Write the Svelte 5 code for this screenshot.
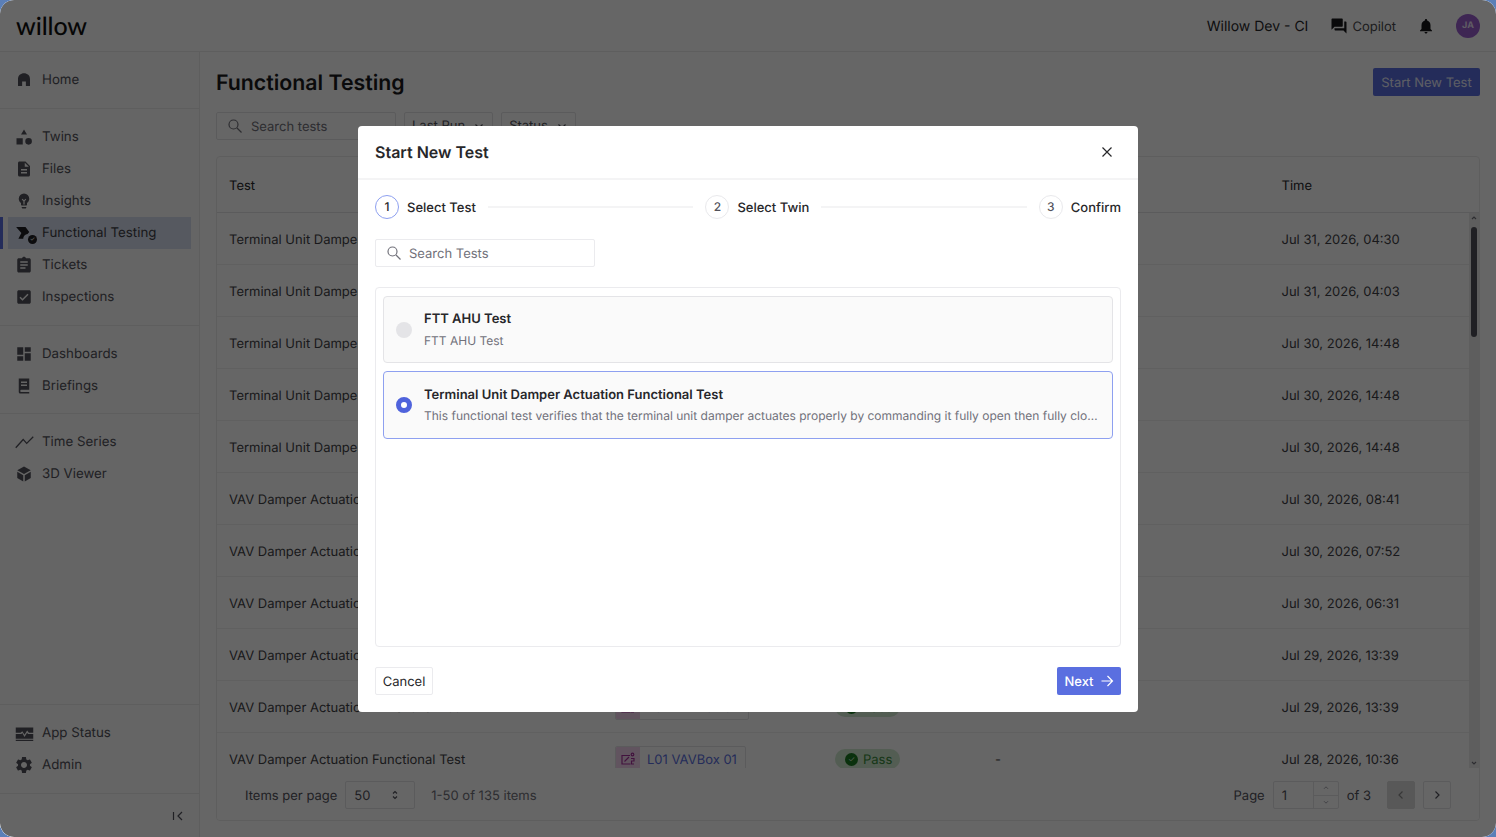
<script lang="ts">
  const icons = {
    home: 'M4 20V10.500C4 6 7.600 3 12 3s8 3 8 7.500V20h-5.500v-6h-5v6z',
    twins: 'M12 3l3.600 6H8.400zM3 13.500h7.500V21H3zM17.500 13.200a4 4 0 1 1 0 8 4 4 0 0 1 0-8z',
    files: 'M14 2H6c-1.100 0-2 .9-2 2v16c0 1.100.9 2 2 2h12c1.100 0 2-.9 2-2V8l-6-6zm2 16H8v-2h8v2zm0-4H8v-2h8v2zm-3-5V3.500L18.500 9H13z',
    insights: 'M12 2a7 7 0 0 0-7 7c0 2.380 1.190 4.470 3 5.740V17a1 1 0 0 0 1 1h6a1 1 0 0 0 1-1v-2.260c1.810-1.270 3-3.360 3-5.740a7 7 0 0 0-7-7zM11.200 16.500v-4.200L9 10l1-1 2 2 2-2 1 1-2.200 2.300v4.200zM9 21a1 1 0 0 0 1 1h4a1 1 0 0 0 1-1v-1H9v1z',
    tickets: 'M19 3h-4.200C14.400 1.800 13.300 1 12 1s-2.400.8-2.800 2H5c-1.100 0-2 .9-2 2v15c0 1.100.9 2 2 2h14c1.100 0 2-.9 2-2V5c0-1.100-.9-2-2-2zM7 7h10v2H7zm0 4h10v2H7zm0 4h7v2H7z',
    inspections: 'M19 3H5c-1.100 0-2 .9-2 2v14c0 1.100.9 2 2 2h14c1.100 0 2-.9 2-2V5c0-1.100-.9-2-2-2zm-9 14l-4-4 1.400-1.400L10 14.200l6.600-6.600L18 9z',
    dashboards: 'M3 13h8V3H3v10zm0 8h8v-6H3v6zm10 0h8V11h-8v10zm0-18v6h8V3h-8z',
    briefings: 'M5 2h14v15H8.500C7.700 17 7 17.700 7 18.500S7.700 20 8.500 20H19v2H7c-1.100 0-2-.9-2-2zM8 6v2h8V6zm0 4v2h8v-2z',
    series: 'M2 18l8.500-9.500 4 4.500 7.500-7.500',
    viewer: 'M12 2l9 5-9 5-9-5zM3 9l8 4.500V22l-8-4.800zM21 9v8.200L13 22v-8.500z',
    status: 'M2 5h20v6h-5l-2-2.500-3 5-2.500-4L7.500 11H2zM2 12.500h6.500l1-1.200L12 16l3-5 1 1.500h6V18H2zM2 19h20v1.500H2z',
    admin: 'M19.140 12.940c.04-.3.06-.61.06-.94 0-.32-.02-.64-.07-.94l2.030-1.580c.18-.14.23-.41.12-.61l-1.920-3.320c-.12-.22-.37-.29-.59-.22l-2.390.96c-.5-.38-1.030-.7-1.620-.94l-.36-2.540c-.04-.24-.24-.41-.48-.41h-3.840c-.24 0-.43.17-.47.41l-.36 2.540c-.59.24-1.130.57-1.620.94l-2.390-.96c-.22-.08-.47 0-.59.22L2.740 8.870c-.12.21-.08.47.12.61l2.030 1.580c-.05.3-.09.63-.09.94s.02.64.07.94l-2.030 1.580c-.18.14-.23.41-.12.61l1.920 3.320c.12.22.37.29.59.22l2.390-.96c.5.38 1.030.7 1.620.94l.36 2.540c.05.24.24.41.48.41h3.840c.24 0 .44-.17.47-.41l.36-2.540c.59-.24 1.130-.56 1.620-.94l2.390.96c.22.08.47 0 .59-.22l1.920-3.320c.12-.22.07-.47-.12-.61l-2.010-1.580zM12 15.600c-1.980 0-3.600-1.620-3.600-3.600s1.620-3.600 3.600-3.600 3.600 1.620 3.600 3.600-1.620 3.600-3.600 3.600z',
    functional: 'M1.500 4H14l5 6.500-2.200 2.800a6 6 0 0 0-5.800 6.200H4.500L8.500 12z'
  };

  const navGroups = [
    [{ label: 'Home', icon: 'home' }],
    [
      { label: 'Twins', icon: 'twins', size: 20 },
      { label: 'Files', icon: 'files' },
      { label: 'Insights', icon: 'insights' },
      { label: 'Functional Testing', icon: 'functional', active: true },
      { label: 'Tickets', icon: 'tickets' },
      { label: 'Inspections', icon: 'inspections' }
    ],
    [
      { label: 'Dashboards', icon: 'dashboards' },
      { label: 'Briefings', icon: 'briefings' }
    ],
    [
      { label: 'Time Series', icon: 'series', size: 21 },
      { label: '3D Viewer', icon: 'viewer' }
    ]
  ];

  const footerNav = [
    { label: 'App Status', icon: 'status', size: 21 },
    { label: 'Admin', icon: 'admin', size: 20 }
  ];

  const terminal = 'Terminal Unit Damper Actuation Functional Test';
  const vav = 'VAV Damper Actuation Functional Test';
  const rows = [
    { test: terminal, twin: 'L01 VAVBox 01', time: 'Jul 31, 2026, 04:30' },
    { test: terminal, twin: 'L01 VAVBox 01', time: 'Jul 31, 2026, 04:03' },
    { test: terminal, twin: 'L01 VAVBox 01', time: 'Jul 30, 2026, 14:48' },
    { test: terminal, twin: 'L01 VAVBox 01', time: 'Jul 30, 2026, 14:48' },
    { test: terminal, twin: 'L01 VAVBox 01', time: 'Jul 30, 2026, 14:48' },
    { test: vav, twin: 'L01 VAVBox 01', time: 'Jul 30, 2026, 08:41' },
    { test: vav, twin: 'L01 VAVBox 01', time: 'Jul 30, 2026, 07:52' },
    { test: vav, twin: 'L01 VAVBox 01', time: 'Jul 30, 2026, 06:31' },
    { test: vav, twin: 'L01 VAVBox 01', time: 'Jul 29, 2026, 13:39' },
    { test: vav, twin: 'L01 VAVBox 02', time: 'Jul 29, 2026, 13:39' },
    { test: vav, twin: 'L01 VAVBox 01', time: 'Jul 28, 2026, 10:36' }
  ];

  const steps = ['Select Test', 'Select Twin', 'Confirm'];

  const tests = [
    { name: 'FTT AHU Test', description: 'FTT AHU Test' },
    {
      name: 'Terminal Unit Damper Actuation Functional Test',
      description:
        'This functional test verifies that the terminal unit damper actuates properly by commanding it fully open then fully closed and confirming the position feedback.'
    }
  ];

  let selected = 1;
</script>

<div class="page">
  <header class="topbar">
    <span class="logo txt">willow</span>
    <div class="top-actions">
      <span class="site txt">Willow Dev - CI</span>
      <span class="copilot">
        <svg viewBox="0 0 24 24" width="18" height="18"><path d="M21 6h-2v9H6v2c0 .55.45 1 1 1h11l4 4V7c0-.55-.45-1-1-1zm-4 6V3c0-.55-.45-1-1-1H3c-.55 0-1 .45-1 1v14l4-4h10c.55 0 1-.45 1-1z" /></svg>
        <span class="txt">Copilot</span>
      </span>
      <svg class="bell" viewBox="0 0 24 24" width="18" height="18"><path d="M12 22c1.100 0 2-.9 2-2h-4c0 1.100.89 2 2 2zm6-6v-5c0-3.070-1.640-5.640-4.500-6.320V4c0-.83-.67-1.500-1.500-1.500s-1.500.67-1.500 1.500v.68C7.630 5.360 6 7.920 6 11v5l-2 2v1h16v-1l-2-2z" /></svg>
      <span class="avatar">JA</span>
    </div>
  </header>

  <div class="body">
    <aside class="sidebar">
      {#each navGroups as group}
        <nav class="nav-group">
          {#each group as item}
            <div class="nav-item" class:active={item.active}>
              <span class="nav-icon" class:stroke={item.icon === 'series'}>
                <svg viewBox="0 0 24 24" width={item.size ?? 18} height={item.size ?? 18}><path d={icons[item.icon]} /></svg>
                {#if item.active}<span class="check-dot">✓</span>{/if}
              </span>
              {item.label}
            </div>
          {/each}
        </nav>
      {/each}
      <div class="spacer"></div>
      <nav class="nav-group foot">
        {#each footerNav as item}
          <div class="nav-item">
            <span class="nav-icon">
              <svg viewBox="0 0 24 24" width={item.size} height={item.size}><path d={icons[item.icon]} /></svg>
            </span>
            {item.label}
          </div>
        {/each}
      </nav>
      <div class="collapse">
        <svg viewBox="0 0 12 12" width="12" height="12"><path d="M1.500 2v8M10 2L6 6l4 4" /></svg>
      </div>
    </aside>

    <main class="main">
      <div class="title-row">
        <h1 class="txt">Functional Testing</h1>
        <button class="primary start">Start New Test</button>
      </div>

      <div class="filters">
        <div class="search wide">
          <svg viewBox="0 0 16 16" width="16" height="16"><circle cx="6.500" cy="6.500" r="4.500" /><path d="M10 10l4.500 4.500" /></svg>
          <span class="txt">Search tests</span>
        </div>
        <div class="filter">Last Run <svg viewBox="0 0 12 12" width="12" height="12"><path d="M2.500 4.500L6 8l3.500-3.500" /></svg></div>
        <div class="filter">Status <svg viewBox="0 0 12 12" width="12" height="12"><path d="M2.500 4.500L6 8l3.500-3.500" /></svg></div>
      </div>

      <section class="table-card">
        <div class="row head">
          <div class="c-test txt">Test</div>
          <div class="c-twin txt">Twin</div>
          <div class="c-status txt">Status</div>
          <div class="c-note txt">Notes</div>
          <div class="c-time txt">Time</div>
        </div>
        <div class="table-body">
          <div class="rows">
            {#each rows as r}
              <div class="row">
                <div class="c-test txt">{r.test}</div>
                <div class="c-twin">
                  <span class="chip">
                    <span class="chip-icon">
                      <svg viewBox="0 0 16 16" width="16" height="16"><path d="M10 4.500H2v8.500h8.500M4.500 10.500L9 6" /><circle cx="12.500" cy="3.500" r="1.300" /><path d="M11 7.500h3v2.500h-2.500v3H14" /></svg>
                    </span>
                    <span class="chip-text">{r.twin}</span>
                  </span>
                </div>
                <div class="c-status">
                  <span class="pass"><span class="pass-dot">✓</span><span class="txt">Pass</span></span>
                </div>
                <div class="c-note txt">-</div>
                <div class="c-time txt">{r.time}</div>
              </div>
            {/each}
          </div>
          <div class="scrollbar">
            <svg viewBox="0 0 10 10" width="10" height="10"><path d="M3 6l2-2 2 2" /></svg>
            <span class="thumb"></span>
            <svg class="down" viewBox="0 0 10 10" width="10" height="10"><path d="M3 4l2 2 2-2" /></svg>
          </div>
        </div>
        <footer class="pager">
          <span class="txt">Items per page</span>
          <span class="page-size"><span class="txt">50</span>
            <svg viewBox="0 0 10 12" width="10" height="12"><path d="M3 4.500l2-2 2 2M3 7.500l2 2 2-2" /></svg>
          </span>
          <span class="count txt">1-50 of 135 items</span>
          <span class="pager-right">
            <span class="txt">Page</span>
            <span class="page-input">
              <span class="page-num">1</span>
              <span class="spin">
                <span><svg viewBox="0 0 10 10" width="8" height="8"><path d="M2.500 6L5 3.500 7.500 6" /></svg></span>
                <span><svg viewBox="0 0 10 10" width="8" height="8"><path d="M2.500 4L5 6.500 7.500 4" /></svg></span>
              </span>
            </span>
            <span class="txt">of 3</span>
            <span class="page-btns">
              <span class="page-btn disabled"><svg viewBox="0 0 12 12" width="12" height="12"><path d="M7.500 2.500L4 6l3.500 3.500" /></svg></span>
              <span class="page-btn"><svg viewBox="0 0 12 12" width="12" height="12"><path d="M4.500 2.500L8 6 4.500 9.500" /></svg></span>
            </span>
          </span>
        </footer>
      </section>
    </main>
  </div>

  <div class="overlay">
    <div class="modal">
      <div class="modal-head">
        <h2>Start New Test</h2>
        <svg class="close" viewBox="0 0 12 12" width="12" height="12"><path d="M1.500 1.500l9 9M10.500 1.500l-9 9" /></svg>
      </div>

      <div class="modal-body">
        <div class="stepper">
          {#each steps as step, i}
            {#if i > 0}<span class="connector"></span>{/if}
            <span class="step">
              <span class="step-num" class:current={i === 0}>{i + 1}</span>
              <span class="step-label txt">{step}</span>
            </span>
          {/each}
        </div>

        <div class="search modal-search">
          <svg viewBox="0 0 16 16" width="16" height="16"><circle cx="6.500" cy="6.500" r="4.500" /><path d="M10 10l4.500 4.500" /></svg>
          <span class="txt">Search Tests</span>
        </div>

        <div class="test-list">
          {#each tests as t, i}
            <button class="test-card" class:chosen={selected === i} onclick={() => (selected = i)}>
              <span class="radio"></span>
              <span class="test-copy">
                <span class="test-name">{t.name}</span>
                <span class="test-desc">{t.description}</span>
              </span>
            </button>
          {/each}
        </div>
      </div>

      <div class="modal-foot">
        <button class="secondary">Cancel</button>
        <button class="primary next">
          <span class="txt">Next</span>
          <svg viewBox="0 0 14 14" width="14" height="14"><path d="M1.500 7h11M7.500 2l5 5-5 5" /></svg>
        </button>
      </div>
    </div>
  </div>
</div>

<style>
  :global(body) {
    background: #5b7fb8;
    font-family: Inter, "Liberation Sans", sans-serif;
    text-rendering: geometricPrecision;
  }
  button {
    font-family: inherit;
    cursor: pointer;
    text-rendering: inherit;
  }
  svg path, svg circle {
    fill: none;
    stroke: currentColor;
    stroke-width: 1.2;
  }
  .txt { margin-top: 2px; }

  .page {
    position: relative;
    width: 1496px;
    height: 837px;
    overflow: hidden;
    background: #fff;
    border-radius: 14px;
    color: #27272a;
    font-size: 13px;
    display: flex;
    flex-direction: column;
  }

  .topbar {
    height: 52px;
    flex: none;
    box-sizing: border-box;
    border-bottom: 1px solid #ebebeb;
    display: flex;
    align-items: center;
    justify-content: space-between;
    padding: 0 16px;
  }
  .logo {
    font-size: 25px;
    font-weight: 500;
    color: #111;
    letter-spacing: -0.1px;
    line-height: 1;
    font-family: Lato, Inter, sans-serif;
  }
  .top-actions {
    display: flex;
    align-items: center;
    color: #3a3a3d;
    font-size: 14px;
  }
  .site { margin-right: 22px; color: #27272a; }
  .copilot { display: flex; align-items: center; gap: 4px; color: #4a4a4e; margin-right: 21px; font-size: 13px; }
  .copilot svg path, .bell path { fill: #18181b; stroke: none; }
  .bell { margin-right: 21px; }
  .avatar {
    width: 24px;
    height: 24px;
    border-radius: 50%;
    background: #9b5fd0;
    color: #f0e6fa;
    font-size: 9px;
    font-weight: 700;
    display: flex;
    align-items: center;
    justify-content: center;
  }

  .body { flex: 1; display: flex; min-height: 0; }

  .sidebar {
    width: 200px;
    flex: none;
    box-sizing: border-box;
    border-right: 1px solid #ebebeb;
    background: #fcfcfc;
    display: flex;
    flex-direction: column;
  }
  .nav-group {
    padding: 12px 8px;
    border-bottom: 1px solid #ebebeb;
  }
  .nav-group:nth-child(3) { padding-bottom: 11px; }
  .nav-group:nth-child(4) { border-bottom: 0; }
  .nav-group.foot { border-top: 1px solid #ebebeb; }
  .spacer { flex: 1; }
  .nav-item {
    position: relative;
    height: 32px;
    display: flex;
    align-items: center;
    gap: 10px;
    padding: 0 0 0 8px;
    box-sizing: border-box;
    color: #52525b;
    font-size: 13.300px;
  }
  .nav-item.active { background: #d7deef; color: #3f3f46; }
  .nav-item.active::before {
    content: '';
    position: absolute;
    left: -8px;
    top: 0;
    bottom: 0;
    width: 3px;
    background: #5a6fe0;
  }
  .nav-icon {
    position: relative;
    width: 16px;
    height: 16px;
    display: flex;
    align-items: center;
    justify-content: center;
    color: #52525b;
  }
  .nav-icon svg { flex: none; }
  .nav-icon path { fill: currentColor; stroke: none; fill-rule: evenodd; }
  .nav-icon.stroke path { fill: none; stroke: currentColor; stroke-width: 1.500; }
  .active .nav-icon { color: #1f1f24; }
  .check-dot {
    position: absolute;
    right: -5px;
    bottom: -3px;
    width: 9px;
    height: 9px;
    border-radius: 50%;
    background: #1f1f24;
    color: #fff;
    font-size: 6px;
    line-height: 9px;
    text-align: center;
    box-shadow: 0 0 0 1px #d7deef;
  }
  .collapse {
    height: 43px;
    flex: none;
    display: flex;
    align-items: center;
    justify-content: flex-end;
    padding-right: 15px;
    color: #52525b;
  }

  .main {
    flex: 1;
    min-width: 0;
    box-sizing: border-box;
    padding: 16px;
    display: flex;
    flex-direction: column;
  }
  .title-row {
    height: 28px;
    display: flex;
    align-items: center;
    justify-content: space-between;
    flex: none;
  }
  h1 { margin: 2px 0 0; font-size: 21.300px; font-weight: 600; color: #1a1a1d; }
  .primary {
    background: #5a6fe0;
    color: #fff;
    border: 0;
    border-radius: 2px;
    font-size: 13px;
    height: 28px;
  }
  .start { width: 107px; padding: 2px 0 0; color: #e8ebfc; }

  .filters {
    margin-top: 16px;
    display: flex;
    gap: 8px;
    flex: none;
  }
  .search {
    height: 28px;
    box-sizing: border-box;
    border: 1px solid #e4e4e7;
    border-radius: 2px;
    display: flex;
    align-items: center;
    gap: 7px;
    padding: 0 10px;
    color: #71717a;
    font-size: 13px;
  }
  .search.wide { width: 180px; gap: 8px; }
  .filter {
    height: 28px;
    box-sizing: border-box;
    border: 1px solid #e4e4e7;
    border-radius: 2px;
    display: flex;
    align-items: center;
    gap: 8px;
    padding: 0 7px;
    color: #52525b;
  }

  .table-card {
    margin-top: 16px;
    flex: 1;
    min-height: 0;
    border: 1px solid #ebebeb;
    border-radius: 4px;
    display: flex;
    flex-direction: column;
    overflow: hidden;
  }
  .row {
    height: 52px;
    box-sizing: border-box;
    display: flex;
    align-items: center;
    border-bottom: 1px solid #f0f0f0;
    flex: none;
    color: #3f3f46;
    padding-left: 12px;
    padding-top: 1px;
  }
  .row.head { height: 56px; color: #27272a; border-bottom-color: #e4e4e7; }
  .c-test { width: 386px; white-space: nowrap; overflow: hidden; }
  .c-twin { width: 220px; }
  .c-status { width: 160px; }
  .c-note { width: 286.500px; }
  .c-time { white-space: nowrap; }
  .table-body { flex: 1; min-height: 0; display: flex; }
  .rows { flex: 1; min-width: 0; overflow: hidden; }
  .chip {
    display: inline-flex;
    height: 26px;
    align-items: stretch;
    border: 1px solid #e4e4e7;
    border-radius: 2px;
    box-sizing: border-box;
    overflow: hidden;
  }
  .chip-icon {
    width: 24px;
    background: #f3d3ee;
    color: #a62f9b;
    display: flex;
    align-items: center;
    justify-content: center;
  }
  .chip-text { padding: 0 8px 0 7px; line-height: 26px; color: #5a6fe0; }
  .pass {
    display: inline-flex;
    align-items: center;
    gap: 5px;
    height: 20px;
    padding: 0 8px 0 10px;
    border-radius: 10px;
    background: #cfe9cf;
    color: #39893c;
  }
  .pass-dot {
    width: 13px;
    height: 13px;
    border-radius: 50%;
    background: #1b7a22;
    color: #d9f0d9;
    font-size: 8px;
    line-height: 13px;
    text-align: center;
  }
  .scrollbar {
    width: 10px;
    flex: none;
    background: #ececec;
    display: flex;
    flex-direction: column;
    align-items: center;
    color: #71717a;
  }
  .thumb {
    width: 6px;
    height: 110px;
    margin-top: 4px;
    border-radius: 3px;
    background: #52525b;
  }
  .down { margin-top: auto; }

  .pager {
    height: 52px;
    flex: none;
    box-sizing: border-box;
    display: flex;
    align-items: center;
    padding: 2px 28px 0;
    color: #52525b;
    background: #fff;
    margin-top: auto;
  }
  .page-size {
    margin-left: 8px;
    width: 70px;
    height: 28px;
    box-sizing: border-box;
    border: 1px solid #e4e4e7;
    border-radius: 2px;
    display: flex;
    align-items: center;
    justify-content: space-between;
    padding: 0 14px 0 8px;
  }
  .count { margin-left: 16px; color: #71717a; }
  .pager-right { margin-left: auto; display: flex; align-items: center; gap: 8px; }
  .page-input {
    width: 66px;
    height: 28px;
    box-sizing: border-box;
    border: 1px solid #e4e4e7;
    border-radius: 2px;
    display: flex;
  }
  .page-num { flex: 1; padding-left: 8px; line-height: 28px; }
  .spin { width: 24px; border-left: 1px solid #e4e4e7; display: flex; flex-direction: column; color: #a1a1aa; }
  .spin span { flex: 1; display: flex; align-items: center; justify-content: center; }
  .spin span:first-child { border-bottom: 1px solid #e4e4e7; }
  .page-btns { display: flex; gap: 8px; margin-left: 8px; }
  .page-btn {
    width: 28px;
    height: 28px;
    box-sizing: border-box;
    border: 1px solid #e4e4e7;
    border-radius: 2px;
    display: flex;
    align-items: center;
    justify-content: center;
  }
  .page-btn.disabled { background: #dcdcdc; border-color: #dcdcdc; color: #8a8a8a; }

  .overlay {
    position: absolute;
    inset: 0;
    background: rgba(0, 0, 0, 0.6);
    border-radius: 14px;
  }
  .modal {
    position: absolute;
    left: 358px;
    top: 126px;
    width: 780px;
    height: 586px;
    background: #fff;
    border-radius: 4px;
    display: flex;
    flex-direction: column;
    color: #27272a;
  }
  .modal-head {
    height: 54px;
    flex: none;
    box-sizing: border-box;
    border-bottom: 2px solid #f4f4f5;
    display: flex;
    align-items: center;
    justify-content: space-between;
    padding: 0 25px 0 17px;
  }
  h2 { margin: 0; font-size: 16px; font-weight: 600; color: #27272a; }
  .close { color: #27272a; }
  .modal-body {
    flex: none;
    padding: 15px 17px 0;
    display: flex;
    flex-direction: column;
  }
  .stepper { display: flex; align-items: center; flex: none; }
  .connector { flex: 1; height: 2px; background: #f4f4f5; margin: 0 12px; }
  .step { display: flex; align-items: center; gap: 8px; }
  .step-num {
    width: 24px;
    height: 24px;
    box-sizing: border-box;
    border-radius: 50%;
    border: 1px solid #e9e9ec;
    color: #52525b;
    font-size: 12px;
    font-weight: 500;
    padding-bottom: 2px;
    display: flex;
    align-items: center;
    justify-content: center;
  }
  .step-num.current { border-color: #8ea0f0; color: #27272a; }
  .step-label { font-weight: 500; font-size: 13px; }
  .modal-search {
    margin-top: 20px;
    width: 220px;
    flex: none;
    border-color: #ebebee;
    color: #71717a;
  }
  .test-list {
    margin-top: 20px;
    height: 360px;
    flex: none;
    box-sizing: border-box;
    border: 1px solid #ebebee;
    border-radius: 4px;
    padding: 8px 7px;
    display: flex;
    flex-direction: column;
    gap: 8px;
  }
  .test-card {
    height: 67px;
    flex: none;
    box-sizing: border-box;
    border: 1px solid #e4e4e7;
    border-radius: 4px;
    background: #fafafa;
    display: flex;
    align-items: center;
    padding: 0 12px;
    gap: 12px;
    text-align: left;
    color: inherit;
    font-size: 13px;
  }
  .test-card.chosen { border-color: #8ea0f0; height: 68px; }
  .radio {
    width: 16px;
    height: 16px;
    border-radius: 50%;
    background: #e4e4e7;
    flex: none;
    box-sizing: border-box;
  }
  .chosen .radio { background: #fff; border: 5px solid #4f63dc; }
  .test-copy { min-width: 0; flex: 1; display: flex; flex-direction: column; gap: 6px; }
  .chosen .test-copy { gap: 5px; }
  .chosen .test-name { margin-top: 1px; }
  .test-name { font-weight: 600; }
  .test-desc {
    color: #71717a;
    font-size: 12px;
    line-height: 16px;
    white-space: nowrap;
    overflow: hidden;
    text-overflow: ellipsis;
  }
  .modal-foot {
    flex: 1;
    box-sizing: border-box;
    display: flex;
    align-items: flex-start;
    justify-content: space-between;
    padding: 20px 17px 0;
  }
  .secondary {
    width: 58px;
    height: 28px;
    background: #fff;
    border: 1px solid #ebebee;
    border-radius: 2px;
    color: #27272a;
    font-size: 13px;
    padding: 2px 0 0;
  }
  .next {
    width: 64px;
    font-weight: 500;
    display: flex;
    align-items: center;
    justify-content: center;
    gap: 6px;
    padding: 0;
  }
</style>
